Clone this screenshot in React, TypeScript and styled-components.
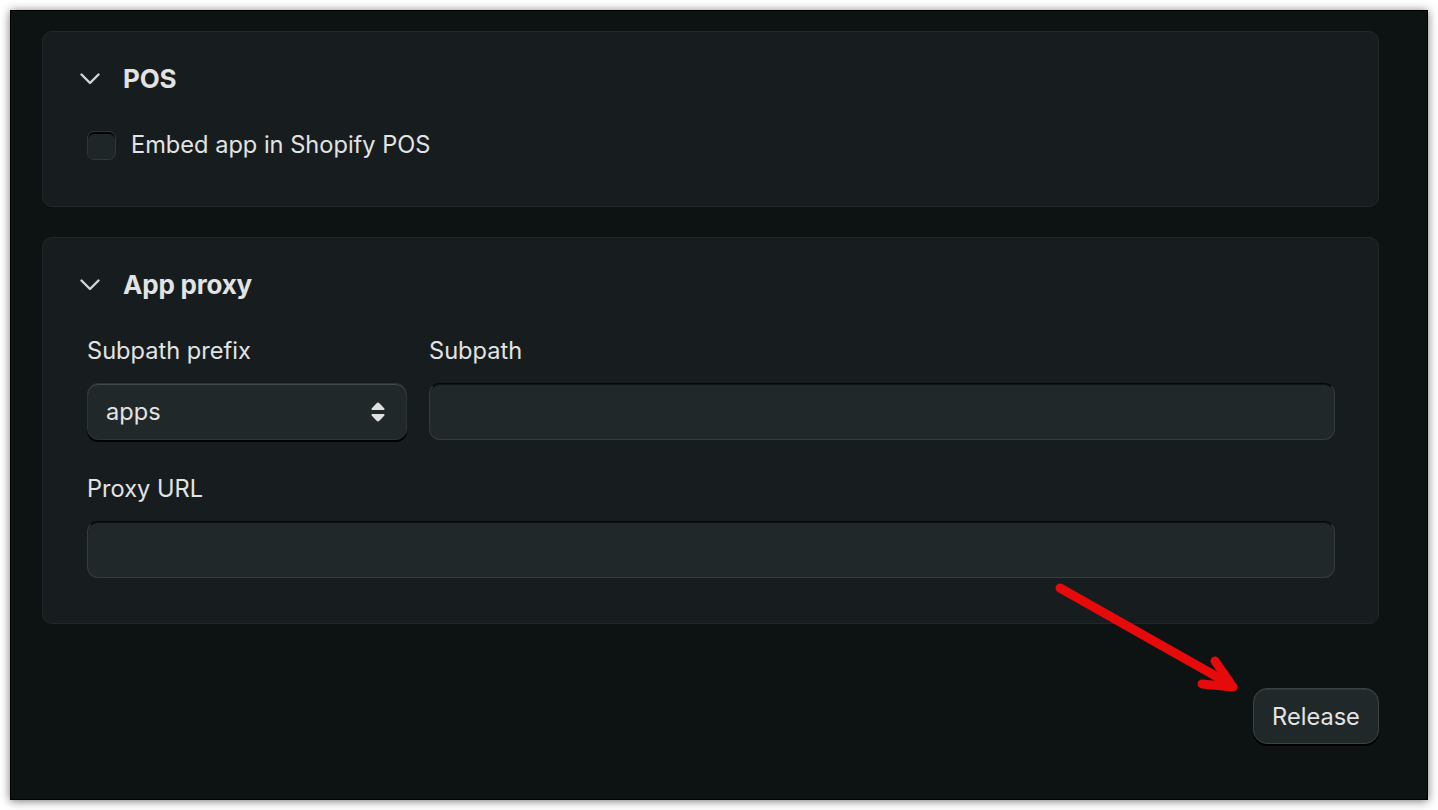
import React from "react";
import styled, { createGlobalStyle } from "styled-components";

const GlobalStyle = createGlobalStyle`
  html, body { margin: 0; padding: 0; background: #ffffff; }
  body { font-family: Inter, "Noto Sans", "Liberation Sans", sans-serif; }
  * { box-sizing: border-box; }
`;

const Page = styled.div`
  width: 1438px;
  height: 810px;
  padding: 10px 11px 10px 10px;
`;

const Frame = styled.div`
  position: relative;
  width: 1418px;
  height: 790px;
  background: #0d1213;
  border: 1px solid #000;
  box-shadow: 0 1px 9px rgba(0, 0, 0, 0.55);
  padding: 20px 48px 0 31px;
  display: flex;
  flex-direction: column;
  gap: 30px;
  color: #e3e3e3;
`;

const Card = styled.section<{ $pt: number; $pb: number }>`
  background: #171d1f;
  border: 1px solid #1f292b;
  border-radius: 10px;
  padding: ${(p) => p.$pt}px 43px ${(p) => p.$pb}px 44px;
  display: flex;
  flex-direction: column;
`;

const Header = styled.div`
  display: flex;
  align-items: center;
  gap: 23px;
  height: 32px;
  margin-left: -7px;
`;

const Title = styled.h2`
  margin: 0;
  font-size: 26px;
  line-height: 32px;
  font-weight: 700;
  letter-spacing: -0.2px;
  color: #e3e3e3;
`;

const CheckRow = styled.label`
  display: flex;
  align-items: center;
  gap: 15px;
  height: 30px;
  margin-top: 35px;
  font-size: 23.6px;
  line-height: 30px;
  color: #e3e3e3;
`;

const CheckBox = styled.span`
  width: 29px;
  height: 29px;
  border-radius: 7px;
  background: #1f2628;
  border: 1px solid #2f3739;
  box-shadow: inset 0 2px 0 rgba(0, 0, 0, 0.9);
`;

const Grid = styled.div`
  display: flex;
  gap: 22px;
  margin-top: 35px;
`;

const Field = styled.div<{ $w?: number; $mt?: number }>`
  display: flex;
  flex-direction: column;
  gap: 17px;
  margin-top: ${(p) => p.$mt ?? 0}px;
  ${(p) => (p.$w ? `width: ${p.$w}px; flex: none;` : "flex: 1;")}
`;

const Label = styled.div`
  font-size: 23.6px;
  line-height: 30px;
  color: #e3e3e3;
`;

const Select = styled.div`
  height: 57px;
  border-radius: 11px;
  background: #212829;
  border: 1px solid #2c3436;
  box-shadow: inset 0 1px 0 rgba(255, 255, 255, 0.16), 0 2px 0 #000;
  display: flex;
  align-items: center;
  justify-content: space-between;
  padding: 0 20px 0 18px;
  font-size: 23.6px;
  color: #e3e3e3;
`;

const Input = styled.div`
  height: 57px;
  border-radius: 11px;
  background: #212829;
  border: 1px solid #343c3e;
  border-top-color: #050708;
  box-shadow: inset 0 1px 0 rgba(0, 0, 0, 0.5);
`;

const Footer = styled.div`
  display: flex;
  justify-content: flex-end;
  margin-top: 34px;
`;

const Button = styled.button`
  width: 126px;
  height: 56px;
  border-radius: 14px;
  background: #212829;
  border: 1px solid #3a4244;
  box-shadow: inset 0 1px 0 rgba(255, 255, 255, 0.08), 0 2px 0 #000;
  color: #e3e3e3;
  font-family: inherit;
  font-size: 23.6px;
  padding: 0;
`;

const ArrowOverlay = styled.svg`
  position: absolute;
  left: 0;
  top: 0;
  pointer-events: none;
`;

const Chevron = () => (
  <svg width="20" height="12" viewBox="0 0 20 12" fill="none">
    <path d="M1.5 1.5 L10 10 L18.5 1.5" stroke="#d4d4d4" strokeWidth="2.4" strokeLinecap="round" strokeLinejoin="round" />
  </svg>
);

const UpDown = () => (
  <svg width="16" height="22" viewBox="0 0 16 22">
    <path d="M8 1.5 Q8.8 1.5 9.4 2.2 L14.4 7.6 Q15 8.6 13.9 9 L2.1 9 Q1 8.6 1.6 7.6 L6.6 2.2 Q7.2 1.5 8 1.5 Z" fill="#e0e0e0" />
    <path d="M8 20.5 Q8.8 20.5 9.4 19.8 L14.4 14.4 Q15 13.4 13.9 13 L2.1 13 Q1 13.4 1.6 14.4 L6.6 19.8 Q7.2 20.5 8 20.5 Z" fill="#e0e0e0" />
  </svg>
);

export default function App() {
  return (
    <>
      <GlobalStyle />
      <Page>
        <Frame>
          <Card $pt={31} $pb={46}>
            <Header>
              <Chevron />
              <Title>POS</Title>
            </Header>
            <CheckRow>
              <CheckBox />
              Embed app in Shopify POS
            </CheckRow>
          </Card>

          <Card $pt={31} $pb={45}>
            <Header>
              <Chevron />
              <Title>App proxy</Title>
            </Header>
            <Grid>
              <Field $w={320}>
                <Label>Subpath prefix</Label>
                <Select>
                  apps
                  <UpDown />
                </Select>
              </Field>
              <Field>
                <Label>Subpath</Label>
                <Input />
              </Field>
            </Grid>
            <Field $mt={34}>
              <Label>Proxy URL</Label>
              <Input />
            </Field>
          </Card>

          <Footer>
            <Button>Release</Button>
          </Footer>

          <ArrowOverlay width="1418" height="790" viewBox="11 11 1418 790">
            <g stroke="#e60a0a" strokeWidth="9" strokeLinecap="round" strokeLinejoin="round" fill="none">
              <path d="M1060 588 L1228 683" />
              <path d="M1215 661 L1233 687 L1202 684" />
            </g>
          </ArrowOverlay>
        </Frame>
      </Page>
    </>
  );
}
